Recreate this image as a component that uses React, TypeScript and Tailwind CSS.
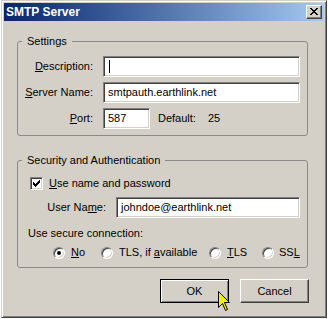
import React from "react";

const sunken =
  "bg-white border border-t-[#808080] border-l-[#808080] border-b-white border-r-white shadow-[inset_1px_1px_0_#404040,inset_-1px_-1px_0_#d4d0c8]";

function CloseGlyph() {
  const r: [number, number, number][] = [
    [0, 0, 2], [6, 0, 2],
    [1, 1, 2], [5, 1, 2],
    [2, 2, 4],
    [3, 3, 2],
    [2, 4, 4],
    [1, 5, 2], [5, 5, 2],
    [0, 6, 2], [6, 6, 2],
  ];
  return (
    <svg width="8" height="7" viewBox="0 0 8 7" shapeRendering="crispEdges">
      {r.map(([x, y, w], i) => (
        <rect key={i} x={x} y={y} width={w} height={1} fill="#000" />
      ))}
    </svg>
  );
}

function CheckGlyph() {
  const r: [number, number, number][] = [
    [6, 0, 1],
    [5, 1, 2],
    [0, 2, 1], [4, 2, 3],
    [0, 3, 2], [3, 3, 3],
    [0, 4, 5],
    [1, 5, 3],
    [2, 6, 1],
  ];
  return (
    <svg width="7" height="7" viewBox="0 0 7 7" shapeRendering="crispEdges">
      {r.map(([x, y, w], i) => (
        <rect key={i} x={x} y={y} width={w} height={1} fill="#000" />
      ))}
    </svg>
  );
}

function Radio({ checked }: { checked?: boolean }) {
  return (
    <span
      className={`w-[12px] h-[12px] rounded-full shrink-0 flex items-center justify-center ${sunken}`}
    >
      {checked && <span className="w-[4px] h-[4px] rounded-full bg-black" />}
    </span>
  );
}

function Cursor() {
  return (
    <svg
      className="absolute left-[218px] top-[291px]"
      width="13"
      height="21"
      viewBox="0 0 13 21"
    >
      <path
        d="M0.5 0.5 L0.5 16.5 L4.5 12.5 L7.5 19.5 L9.5 18.5 L6.5 11.5 L11.5 11.5 Z"
        fill="#f0f000"
        stroke="#000"
        strokeWidth="1"
        strokeLinejoin="miter"
      />
    </svg>
  );
}

export default function App() {
  return (
    <div className="relative w-[328px] h-[319px] bg-white font-['Liberation_Sans',Arial,sans-serif] text-[11px] leading-[13px] text-black">
      <div className="ml-[1px] w-[326px] h-[318px] bg-[#d4d0c8] border border-t-[#d4d0c8] border-l-[#d4d0c8] border-b-[#404040] border-r-[#404040] shadow-[inset_1px_1px_0_#fff,inset_-1px_-1px_0_#808080] p-[2px] flex flex-col">
        {/* Title bar */}
        <div className="h-[18px] shrink-0 bg-gradient-to-r from-[#0a246a] to-[#a6caf0] flex items-center justify-between pl-[2px] pr-[2px]">
          <span className="text-white font-bold text-[12px] leading-[14px]">SMTP Server</span>
          <span className="w-[16px] h-[14px] bg-[#d4d0c8] border border-t-white border-l-white border-b-[#404040] border-r-[#404040] shadow-[inset_-1px_-1px_0_#808080] flex items-center justify-center pb-[1px]">
            <CloseGlyph />
          </span>
        </div>

        {/* Settings */}
        <fieldset className="ml-[13px] mt-[14px] w-[291px] border border-[#8a8a8a] rounded-[3px] pt-[8px] pb-[6px] min-w-0">
          <legend className="ml-[4px] px-[5px] leading-[13px]">Settings</legend>
          <div className="flex flex-col gap-[5px]">
            <div className="flex items-center h-[21px]">
              <span className="w-[75px] text-right">
                <u className="underline-offset-[1px]">D</u>escription:
              </span>
              <div className={`ml-[10px] w-[197px] h-[21px] flex items-center pl-[5px] ${sunken}`}>
                <span className="w-[1px] h-[13px] bg-black" />
              </div>
            </div>
            <div className="flex items-center h-[21px]">
              <span className="w-[75px] text-right">
                <u className="underline-offset-[1px]">S</u>erver Name:
              </span>
              <div className={`ml-[10px] w-[197px] h-[21px] flex items-center pl-[4px] ${sunken}`}>
                smtpauth.earthlink.net
              </div>
            </div>
            <div className="flex items-center h-[21px]">
              <span className="w-[75px] text-right">
                <u className="underline-offset-[1px]">P</u>ort:
              </span>
              <div className={`ml-[10px] w-[47px] h-[21px] flex items-center pl-[4px] ${sunken}`}>
                587
              </div>
              <span className="ml-[8px]">Default:</span>
              <span className="ml-[12px]">25</span>
            </div>
          </div>
        </fieldset>

        {/* Security */}
        <fieldset className="ml-[13px] mt-[18px] w-[291px] border border-[#8a8a8a] rounded-[3px] pt-[10px] pb-[8px] min-w-0">
          <legend className="ml-[4px] px-[5px] leading-[13px]">Security and Authentication</legend>
          <div className="flex flex-col">
            <div className="flex items-center h-[13px] pl-[12px] gap-[6px]">
              <span className={`w-[13px] h-[13px] shrink-0 flex items-center justify-center ${sunken}`}>
                <CheckGlyph />
              </span>
              <span>
                <u className="underline-offset-[1px]">U</u>se name and password
              </span>
            </div>
            <div className="flex items-center h-[21px] mt-[7px]">
              <span className="w-[88px] text-right">
                User Na<u className="underline-offset-[1px]">m</u>e:
              </span>
              <div className={`ml-[10px] w-[184px] h-[21px] flex items-center pl-[4px] ${sunken}`}>
                johndoe@earthlink.net
              </div>
            </div>
            <div className="mt-[9px] pl-[10px] h-[13px]">Use secure connection:</div>
            <div className="mt-[6px] h-[13px] pl-[35px] flex items-center">
              <div className="w-[48px] flex items-center gap-[6px]">
                <Radio checked />
                <span>
                  <u className="underline-offset-[1px]">N</u>o
                </span>
              </div>
              <div className="w-[108px] flex items-center gap-[6px]">
                <Radio />
                <span>
                  TLS, if <u className="underline-offset-[1px]">a</u>vailable
                </span>
              </div>
              <div className="w-[53px] flex items-center gap-[6px]">
                <Radio />
                <span>
                  <u className="underline-offset-[1px]">T</u>LS
                </span>
              </div>
              <div className="flex items-center gap-[5px]">
                <Radio />
                <span>
                  SS<u className="underline-offset-[1px]">L</u>
                </span>
              </div>
            </div>
          </div>
        </fieldset>

        {/* Buttons */}
        <div className="mt-[11px] flex justify-end gap-[11px] pr-[15px]">
          <div className="w-[69px] h-[24px] flex items-center justify-center border border-black shadow-[inset_1px_1px_0_#fff,inset_-1px_-1px_0_#808080]">
            OK
          </div>
          <div className="w-[69px] h-[24px] flex items-center justify-center border border-t-white border-l-white border-b-[#404040] border-r-[#404040] shadow-[inset_-1px_-1px_0_#808080]">
            Cancel
          </div>
        </div>
      </div>
      <Cursor />
    </div>
  );
}
